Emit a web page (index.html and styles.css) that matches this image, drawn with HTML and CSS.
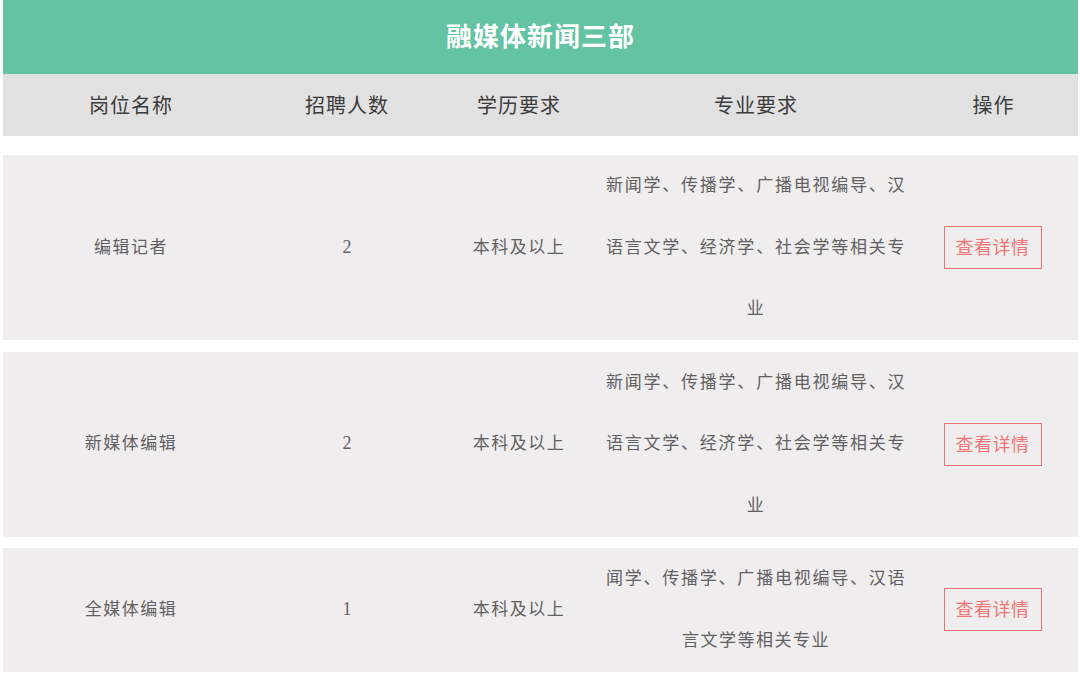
FILE: index.html
```html
<!DOCTYPE html>
<html lang="zh-CN">
<head>
<meta charset="utf-8">
<title>融媒体新闻三部</title>
<link rel="stylesheet" href="styles.css">
</head>
<body>
<div class="wrap">
  <div class="title">融媒体新闻三部</div>
  <div class="head">
    <div class="hc">岗位名称</div>
    <div class="hc">招聘人数</div>
    <div class="hc">学历要求</div>
    <div class="hc">专业要求</div>
    <div class="hc">操作</div>
  </div>
  <div class="rows">
    <div class="row">
      <div class="cell">编辑记者</div>
      <div class="cell num">2</div>
      <div class="cell">本科及以上</div>
      <div class="cell major">新闻学、传播学、广播电视编导、汉语言文学、经济学、社会学等相关专业</div>
      <div class="cell"><span class="btn">查看详情</span></div>
    </div>
    <div class="row">
      <div class="cell">新媒体编辑</div>
      <div class="cell num">2</div>
      <div class="cell">本科及以上</div>
      <div class="cell major">新闻学、传播学、广播电视编导、汉语言文学、经济学、社会学等相关专业</div>
      <div class="cell"><span class="btn">查看详情</span></div>
    </div>
    <div class="row">
      <div class="cell">全媒体编辑</div>
      <div class="cell num">1</div>
      <div class="cell">本科及以上</div>
      <div class="cell major">闻学、传播学、广播电视编导、汉语言文学等相关专业</div>
      <div class="cell"><span class="btn">查看详情</span></div>
    </div>
  </div>
</div>
</body>
</html>
```

FILE: styles.css
```css
html, body {
  margin: 0;
  padding: 0;
  background: #ffffff;
}
.wrap {
  margin: 0 2px 0 3px;
  font-family: "Noto Sans CJK SC", sans-serif;
}
.title {
  box-sizing: border-box;
  height: 74px;
  padding-bottom: 5px;
  background: #64c3a2;
  color: #ffffff;
  font-size: 26px;
  font-weight: bold;
  letter-spacing: 1px;
  display: flex;
  align-items: center;
  justify-content: center;
}
.head, .row {
  display: grid;
  grid-template-columns: 256px 176px 168px 306px 1fr;
}
.head {
  box-sizing: border-box;
  height: 62px;
  padding-bottom: 2px;
  background: #e1e1e1;
}
.hc {
  display: flex;
  align-items: center;
  justify-content: center;
  font-size: 20px;
  letter-spacing: 1px;
  color: #3c3c3c;
}
.rows {
  display: flex;
  flex-direction: column;
  gap: 11.5px;
  padding-top: 19px;
}
.row {
  background: #efedee;
}
.cell {
  display: flex;
  align-items: center;
  justify-content: center;
  font-family: "Liberation Serif", "Noto Sans CJK SC", serif;
  font-size: 17px;
  letter-spacing: 1.5px;
  color: #616161;
  line-height: 61.7px;
}
.cell.num {
  font-size: 18px;
  letter-spacing: 0;
}
.cell.major {
  display: block;
  padding: 0 3px;
  text-align: justify;
  text-align-last: center;
}
.btn {
  display: inline-block;
  box-sizing: border-box;
  width: 98px;
  height: 43px;
  border: 1px solid #ea7474;
  color: #ef7676;
  font-family: "Noto Sans CJK SC", sans-serif;
  font-size: 18px;
  letter-spacing: 0.5px;
  line-height: 39px;
  text-align: center;
  margin-right: 2px;
}
```
